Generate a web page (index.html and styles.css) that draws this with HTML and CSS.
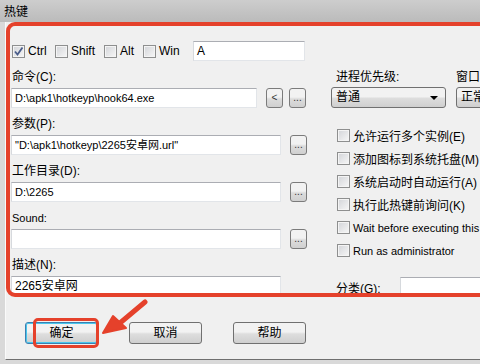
FILE: index.html
```html
<!DOCTYPE html>
<html lang="zh-CN">
<head>
    <meta charset="UTF-8">
    <title>热键</title>
    <link rel="stylesheet" href="styles.css">
</head>
<body>
    <div class="window">
        <div class="titlebar">热键</div>
        <div class="client">
            <!-- Modifier keys -->
            <div class="keys">
                <label class="check ctrl"><span class="box"><svg width="11" height="11" viewBox="0 0 11 11"><path d="M2 5.5 L4.5 8.5 L9.5 1.5" fill="none" stroke="#4a5d8a" stroke-width="1.8"/></svg></span>Ctrl</label>
                <label class="check shift"><span class="box"></span>Shift</label>
                <label class="check alt"><span class="box"></span>Alt</label>
                <label class="check win"><span class="box"></span>Win</label>
                <div class="field key">A</div>
            </div>

            <div class="columns">
                <div class="left">
                    <div class="group">
                        <div class="label zh">命令(C):</div>
                        <div class="row">
                            <div class="field cmd">D:\apk1\hotkeyp\hook64.exe</div>
                            <span class="mini">&lt;</span>
                            <span class="mini">...</span>
                        </div>
                    </div>
                    <div class="group">
                        <div class="label zh">参数(P):</div>
                        <div class="row">
                            <div class="field wide">"D:\apk1\hotkeyp\2265安卓网.url"</div>
                            <span class="mini">...</span>
                        </div>
                    </div>
                    <div class="group">
                        <div class="label zh">工作目录(D):</div>
                        <div class="row">
                            <div class="field wide">D:\2265</div>
                            <span class="mini">...</span>
                        </div>
                    </div>
                    <div class="group">
                        <div class="label">Sound:</div>
                        <div class="row">
                            <div class="field wide"></div>
                            <span class="mini">...</span>
                        </div>
                    </div>
                    <div class="group">
                        <div class="label zh">描述(N):</div>
                        <div class="row">
                            <div class="field wide zh">2265安卓网</div>
                        </div>
                    </div>
                </div>

                <div class="right">
                    <div class="prio">
                        <div class="pcol first">
                            <div class="label">进程优先级:</div>
                            <div class="select">普通<span class="caret"></span></div>
                        </div>
                        <div class="pcol">
                            <div class="label">窗口状态:</div>
                            <div class="select">正常<span class="caret"></span></div>
                        </div>
                    </div>
                    <ul class="options">
                        <li class="zh"><span class="box"></span>允许运行多个实例(E)</li>
                        <li class="zh"><span class="box"></span>添加图标到系统托盘(M)</li>
                        <li class="zh"><span class="box"></span>系统启动时自动运行(A)</li>
                        <li class="zh"><span class="box"></span>执行此热键前询问(K)</li>
                        <li><span class="box"></span>Wait before executing this hotkey</li>
                        <li><span class="box"></span>Run as administrator</li>
                    </ul>
                    <div class="cat">
                        <span class="cat-label zh">分类(G):</span>
                        <div class="field cat-field"></div>
                    </div>
                </div>
            </div>

            <div class="buttons">
                <span class="btn focus">确定</span>
                <span class="btn">取消</span>
                <span class="btn">帮助</span>
            </div>
        </div>
    </div>

    <!-- red annotations -->
    <div class="mark mark-form"></div>
    <div class="mark mark-ok"></div>
    <svg class="pointer" width="60" height="50" viewBox="0 0 60 50">
        <line x1="45" y1="3" x2="20" y2="24" stroke="#e5412b" stroke-width="5" stroke-linecap="round"/>
        <polygon points="3,34 13,17 26,29" fill="#e5412b" stroke="#e5412b" stroke-width="2" stroke-linejoin="round"/>
    </svg>
</body>
</html>
```

FILE: styles.css
```css
body {
    margin: 0;
    width: 480px;
    height: 364px;
    overflow: hidden;
    position: relative;
    font-family: "Liberation Sans", "Noto Sans CJK SC", sans-serif;
    font-size: 11px;
    color: #000;
    background: #d9d9d9;
}
.zh { font-size: 12px; }
.window {
    height: 364px;
    overflow: hidden;
}
.titlebar {
    height: 22px;
    line-height: 22px;
    padding-left: 4px;
    font-family: "Noto Sans CJK SC", sans-serif;
    font-size: 12px;
    background: linear-gradient(#cdcdcd, #bbbbbb);
}
.client {
    margin-left: 5px;
    height: 338px;
    box-sizing: border-box;
    padding: 18px 0 0 5px;
    background: #f0f0f0;
    border-left: 1px solid #fafafa;
    border-bottom: 1px solid #6f6f6f;
    width: 600px;
}

/* checkboxes */
.box {
    display: inline-flex;
    align-items: center;
    justify-content: center;
    width: 13px;
    height: 13px;
    box-sizing: border-box;
    border: 1px solid #8e8f8f;
    background: linear-gradient(135deg, #d2d4d8, #f7f7f7);
    box-shadow: inset 0 0 0 1px #f4f4f4;
    flex-shrink: 0;
}
.check {
    display: flex;
    align-items: center;
    gap: 3px;
    font-size: 12px;
}

.keys {
    display: flex;
    align-items: center;
    height: 20px;
    margin-top: 1px;
    padding-left: 1px;
}
.ctrl { width: 43px; }
.shift { width: 49px; }
.alt { width: 39px; }
.win { width: 50px; }

.field {
    height: 20px;
    box-sizing: border-box;
    border: 1px solid #e2e5e9;
    border-top-color: #abadb3;
    border-left-color: #d6d9dd;
    background: #fff;
    padding: 0 3px;
    line-height: 18px;
    white-space: nowrap;
    overflow: hidden;
}
.key { width: 112px; font-size: 12px; }
.cmd { width: 246px; }
.wide { width: 270px; }

.columns {
    display: flex;
    margin-top: 8px;
}
.left { width: 296px; }
.label {
    height: 16px;
    line-height: 16px;
    margin-bottom: 3px;
    padding-left: 1px;
    white-space: nowrap;
}
.group { margin-bottom: 8px; }
.group:last-child { margin-bottom: 0; }
.row {
    display: flex;
    align-items: center;
}
.mini {
    width: 17px;
    height: 20px;
    box-sizing: border-box;
    margin-left: 9px;
    border: 1px solid #7b7b7b;
    border-radius: 3px;
    background: linear-gradient(#f2f2f2 45%, #dcdcdc 55%, #d0d0d0);
    text-align: center;
    line-height: 17px;
    font-size: 10px;
    color: #333;
}
.mini + .mini { margin-left: 6px; }

.right { margin-left: 24px; }
.prio { display: flex; gap: 10px; }
.pcol.first { width: 115px; }
.pcol .label { padding-left: 5px; font-size: 12px; }
.pcol + .pcol .label { padding-left: 0; }
.select {
    position: relative;
    width: 115px;
    height: 21px;
    box-sizing: border-box;
    margin-top: -1px;
    border: 1px solid #707070;
    border-radius: 3px;
    background: linear-gradient(#f2f2f2 45%, #dddddd 55%, #cfcfcf);
    padding-left: 4px;
    line-height: 19px;
    font-size: 12px;
}
.caret {
    position: absolute;
    right: 7px;
    top: 8px;
    border-left: 4px solid transparent;
    border-right: 4px solid transparent;
    border-top: 4px solid #000;
}

.options {
    list-style: none;
    margin: 16px 0 0;
    padding: 0;
}
.options li {
    display: flex;
    align-items: center;
    gap: 3px;
    height: 23px;
    padding-left: 6px;
    white-space: nowrap;
}

.cat {
    display: flex;
    align-items: center;
    margin-top: 15px;
}
.cat-label {
    width: 64px;
    padding-left: 5px;
}
.cat-field { width: 120px; }

.buttons {
    display: flex;
    gap: 31px;
    margin: 25px 0 0 14px;
}
.btn {
    width: 73px;
    height: 22px;
    box-sizing: border-box;
    border: 1px solid #707070;
    border-radius: 3px;
    background: linear-gradient(#f2f2f2 45%, #dddddd 55%, #cfcfcf);
    text-align: center;
    line-height: 20px;
    font-size: 12px;
}
.btn.focus {
    border-color: #3c7fb1;
    box-shadow: inset 0 0 0 1px #49c6ec;
}

/* annotation overlays */
.mark {
    position: absolute;
    border: 4px solid #e5412b;
    box-sizing: border-box;
}
.mark-form {
    left: 6px;
    top: 22px;
    width: 490px;
    height: 275px;
    border-radius: 9px;
}
.mark-ok {
    left: 33px;
    top: 318px;
    width: 66px;
    height: 30px;
    border-width: 3px;
    border-radius: 5px;
}
.pointer {
    position: absolute;
    left: 100px;
    top: 299px;
}
```
